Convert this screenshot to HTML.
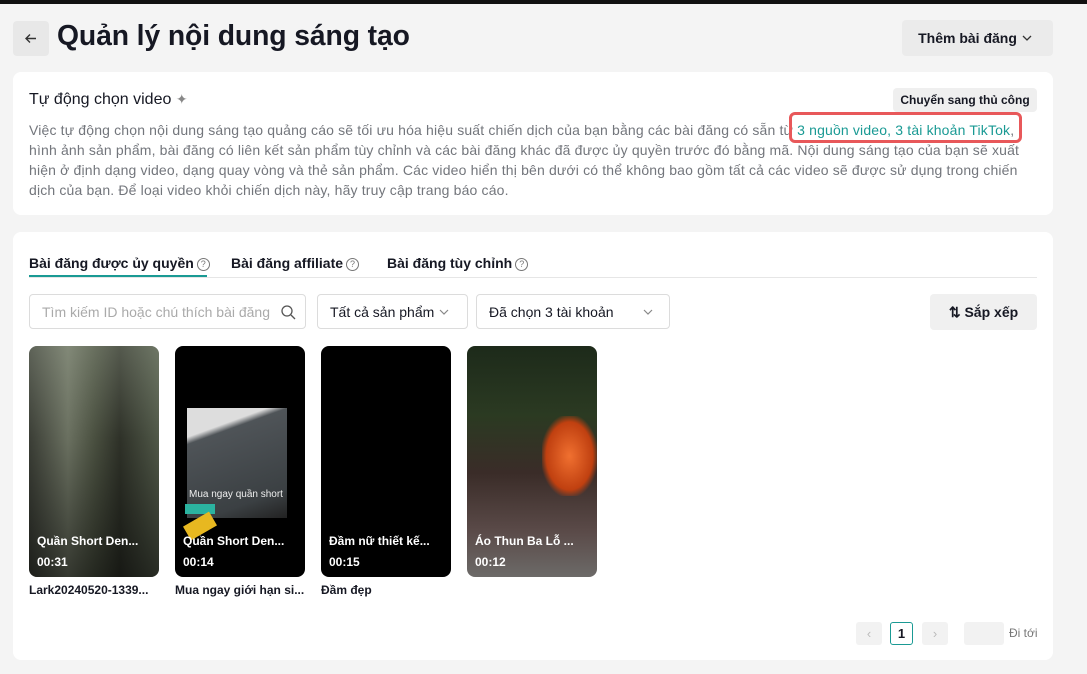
<!DOCTYPE html>
<html><head><meta charset="utf-8">
<style>
*{box-sizing:border-box;margin:0;padding:0}
body{width:1087px;height:674px;background:#f4f4f4;font-family:"Liberation Sans",Arial,sans-serif;position:relative;overflow:hidden;color:#161823}
.abs{position:absolute}
.topbar{left:0;top:0;width:1087px;height:4px;background:#111}
.back{left:13px;top:21px;width:36px;height:35px;background:#e8e8e8;border-radius:4px}
h1{position:absolute;left:57px;top:19px;font-size:28.3px;font-weight:bold;letter-spacing:-0.1px}
.btn{background:#ebebeb;border-radius:4px;font-weight:bold;font-size:14px;display:flex;align-items:center;justify-content:center}
.card{background:#fff;border-radius:8px}
.desc{left:29px;top:120px;width:1000px;font-size:14px;line-height:20px;color:#73767c;letter-spacing:0.16px}
.link{color:#1a9a94}
.tab{position:absolute;top:255px;font-size:14px;font-weight:bold;color:#161823}
.q{display:inline-block;width:13px;height:13px;border:1px solid #777;border-radius:50%;font-size:9px;line-height:11px;text-align:center;color:#777;font-weight:normal;vertical-align:1px;margin-left:3px}
.inp{position:absolute;top:294px;height:35px;border:1px solid #dcdcdc;border-radius:4px;font-size:14px;display:flex;align-items:center;padding-left:12px;overflow:hidden;white-space:nowrap}
.thumb{position:absolute;top:346px;width:130px;height:231px;border-radius:8px;overflow:hidden;background:#000}
.tt{position:absolute;left:8px;top:188px;color:#fff;font-size:12px;font-weight:bold;white-space:nowrap}
.td{position:absolute;left:8px;top:209px;color:#fff;font-size:12px;font-weight:bold}
.cap{position:absolute;top:583px;font-size:12px;font-weight:bold;color:#161823}
.pg{position:absolute;top:622px;height:23px;border-radius:3px;background:#f2f2f2;font-size:13px;display:flex;align-items:center;justify-content:center;color:#bbb}
</style></head><body>
<div class="abs topbar"></div>
<div class="abs back"><svg width="36" height="35"><path d="M23 17.5H13M17 13.5l-4 4 4 4" stroke="#333" stroke-width="1.4" fill="none"/></svg></div>
<h1>Quản lý nội dung sáng tạo</h1>
<div class="abs btn" style="left:902px;top:20px;width:151px;height:36px">Thêm bài đăng <svg width="20" height="12"><path d="M6 4l4 4 4-4" stroke="#333" stroke-width="1.3" fill="none"/></svg></div>

<div class="abs card" style="left:13px;top:72px;width:1040px;height:143px"></div>
<div class="abs" style="left:29px;top:91px;font-size:16px;color:#161823">Tự động chọn video <span style="color:#888;font-size:14px">✦</span></div>
<div class="abs btn" style="left:893px;top:88px;width:144px;height:24px;font-size:12px;background:#efefef">Chuyển sang thủ công</div>
<div class="abs desc">Việc tự động chọn nội dung sáng tạo quảng cáo sẽ tối ưu hóa hiệu suất chiến dịch của bạn bằng các bài đăng có sẵn từ <span class="link">3 nguồn video, 3 tài khoản TikTok</span>, hình ảnh sản phẩm, bài đăng có liên kết sản phẩm tùy chỉnh và các bài đăng khác đã được ủy quyền trước đó bằng mã. Nội dung sáng tạo của bạn sẽ xuất hiện ở định dạng video, dạng quay vòng và thẻ sản phẩm. Các video hiển thị bên dưới có thể không bao gồm tất cả các video sẽ được sử dụng trong chiến dịch của bạn. Để loại video khỏi chiến dịch này, hãy truy cập trang báo cáo.</div>
<div class="abs" style="left:789px;top:112px;width:233px;height:31px;border:3px solid #e8585a;border-radius:6px"></div>

<div class="abs card" style="left:13px;top:232px;width:1040px;height:428px"></div>
<div class="tab" style="left:29px">Bài đăng được ủy quyền<span class="q">?</span></div>
<div class="tab" style="left:231px">Bài đăng affiliate<span class="q">?</span></div>
<div class="tab" style="left:387px">Bài đăng tùy chỉnh<span class="q">?</span></div>
<div class="abs" style="left:29px;top:277px;width:1008px;height:1px;background:#e6e6e6"></div>
<div class="abs" style="left:29px;top:275px;width:178px;height:2px;background:#1a9a94"></div>

<div class="inp" style="left:29px;width:277px;color:#aaa"><span style="width:228px;overflow:hidden;display:inline-block">Tìm kiếm ID hoặc chú thích bài đăng</span><svg class="abs" style="left:250px;top:9px" width="16" height="16"><circle cx="7" cy="7" r="5" stroke="#555" stroke-width="1.3" fill="none"/><path d="M11 11l4 4" stroke="#555" stroke-width="1.3"/></svg></div>
<div class="inp" style="left:317px;width:151px">Tất cả sản phẩm <svg width="20" height="12"><path d="M6 4l4 4 4-4" stroke="#888" stroke-width="1.2" fill="none"/></svg></div>
<div class="inp" style="left:476px;width:194px">Đã chọn 3 tài khoản<svg class="abs" style="left:164px;top:12px" width="14" height="10"><path d="M3 3l4 4 4-4" stroke="#888" stroke-width="1.2" fill="none"/></svg></div>
<div class="abs btn" style="left:930px;top:294px;width:107px;height:36px;background:#f0f0f0">⇅ Sắp xếp</div>

<div class="thumb" style="left:29px;background:linear-gradient(90deg,#3a3d35,#6a7060 30%,#4a5040 50%,#2e3128 70%,#505848);">
 <div class="abs" style="left:0;top:0;width:130px;height:231px;background:linear-gradient(180deg,rgba(200,210,190,.25),rgba(0,0,0,0) 40%,rgba(0,0,0,.5))"></div>
 <div class="tt">Quần Short Den...</div><div class="td">00:31</div></div>
<div class="thumb" style="left:175px">
 <div class="abs" style="left:12px;top:62px;width:100px;height:110px;background:linear-gradient(160deg,#ddd 0,#ddd 20%,#4f5458 25%,#3b4043 80%,#222 100%)"></div>
 <div class="abs" style="left:14px;top:143px;color:#eee;font-size:10px">Mua ngay quần short</div>
 <div class="abs" style="left:10px;top:158px;width:30px;height:10px;background:#2bb3a0"></div>
 <div class="abs" style="left:10px;top:172px;width:30px;height:16px;background:#e8b820;transform:rotate(-30deg)"></div>
 <div class="tt">Quần Short Den...</div><div class="td">00:14</div></div>
<div class="thumb" style="left:321px"><div class="tt">Đầm nữ thiết kế...</div><div class="td">00:15</div></div>
<div class="thumb" style="left:467px;background:linear-gradient(180deg,#1d2a1a 0,#2b3a22 30%,#3a2c28 55%,#5a4a48 80%,#6c6a68 100%)">
 <div class="abs" style="left:75px;top:70px;width:55px;height:80px;background:radial-gradient(#f07030,#c04010 60%,rgba(0,0,0,0) 75%)"></div>
 <div class="tt">Áo Thun Ba Lỗ ...</div><div class="td">00:12</div></div>
<div class="cap" style="left:29px">Lark20240520-1339...</div>
<div class="cap" style="left:175px">Mua ngay giới hạn si...</div>
<div class="cap" style="left:321px">Đầm đẹp</div>

<div class="pg" style="left:856px;width:26px">‹</div>
<div class="pg" style="left:890px;width:23px;background:#fff;border:1px solid #1a9a94;color:#161823;font-weight:bold">1</div>
<div class="pg" style="left:922px;width:26px">›</div>
<div class="pg" style="left:964px;width:40px"></div>
<div class="abs" style="left:1009px;top:626px;font-size:12px;color:#777">Đi tới</div>
</body></html>
